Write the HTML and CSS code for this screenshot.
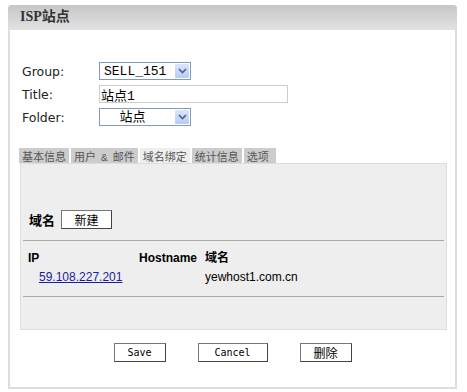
FILE: index.html
```html
<!DOCTYPE html>
<html lang="zh">
<head>
  <meta charset="UTF-8" />
  <title>ISP站点</title>
  <link rel="stylesheet" href="styles.css">
</head>
<body>
  <div class="panel">
    <div class="panel-head">ISP站点</div>
    <div class="panel-body">

      <div class="form">
        <div class="row">
          <label>Group:</label>
          <div class="selectbox sel-group">
            <select><option>SELL_151</option></select>
            <span class="arrow"><svg width="9" height="6" viewBox="0 0 9 6"><path d="M1 1 L4.5 4.5 L8 1" fill="none" stroke="#4d6185" stroke-width="1.6"/></svg></span>
          </div>
        </div>
        <div class="row">
          <label>Title:</label>
          <input type="text" class="txt" value="站点1">
        </div>
        <div class="row">
          <label>Folder:</label>
          <div class="selectbox sel-folder">
            <select><option>&nbsp;&nbsp;站点</option></select>
            <span class="arrow"><svg width="9" height="6" viewBox="0 0 9 6"><path d="M1 1 L4.5 4.5 L8 1" fill="none" stroke="#4d6185" stroke-width="1.6"/></svg></span>
          </div>
        </div>
      </div>

      <div class="tabs">
        <span class="tab">基本信息</span>
        <span class="tab">用户 &amp; 邮件</span>
        <span class="tab active">域名绑定</span>
        <span class="tab">统计信息</span>
        <span class="tab tab-last">选项</span>
      </div>

      <div class="tab-box">
        <div class="domain-bar">
          <b>域名</b>
          <button class="btn btn-new">新建</button>
        </div>
        <hr>
        <div class="grid">
          <b>IP</b><b>Hostname</b><b>域名</b>
          <a href="#" class="ip">59.108.227.201</a><span></span><span>yewhost1.com.cn</span>
        </div>
        <hr class="hr-low">
      </div>

      <div class="actions">
        <button class="btn btn-save">Save</button>
        <button class="btn btn-cancel">Cancel</button>
        <button class="btn btn-del">删除</button>
      </div>

    </div>
  </div>
</body>
</html>
```

FILE: styles.css
```css
body { margin: 0; background: #fff; font-family: "DejaVu Sans", Verdana, sans-serif; color: #222; }
.panel { margin: 5px 0 0 8px; width: 445px; border: 2px solid #ddd; border-top: none; border-radius: 4px 4px 0 0; }
.panel-head { height: 25px; margin: 0 -2px; padding-left: 12px; line-height: 25px; border-radius: 4px 4px 0 0;
  background: linear-gradient(#c6c6c6, #e2e2e2); font: bold 14px "Liberation Serif", "Noto Sans CJK SC", serif; color: #333; }
.panel-body { padding: 32px 0 25px 0; }

.form { padding-left: 12px; display: flex; flex-direction: column; gap: 5px; }
.row { display: flex; align-items: center; height: 18px; }
.row label { width: 77px; font-size: 12.5px; color: #222; }
.selectbox { display: flex; align-items: center; height: 16px; border: 1px solid #7f9db9; background: #fff; }
.selectbox select { appearance: none; -webkit-appearance: none; border: none; background: transparent; outline: none; padding: 0 0 0 4px;
  font: 13px "Liberation Mono", "Noto Sans CJK SC", monospace; color: #000; flex: 1; height: 16px; }
.sel-group { width: 90px; }
.sel-folder { width: 90px; }
.arrow { width: 14px; height: 14px; margin-right: 1px; display: flex; align-items: center; justify-content: center;
  background: linear-gradient(#dbe6fd, #b8cbf6); border-radius: 1px; }
.txt { width: 186px; height: 16px; box-sizing: content-box; padding: 0 0 0 1px; border: 1px solid #ccc;
  font: 13px "Liberation Mono", "Noto Sans CJK SC", monospace; color: #000; }

.tabs { display: flex; gap: 2px; margin: 22px 0 0 9px; }
.tab { background: #ccc; padding: 0 3px; height: 15px; line-height: 16px; white-space: pre; word-spacing: -1.5px;
  font: 11px "Liberation Mono", "Noto Sans CJK SC", monospace; color: #555; }
.tab.active { background: #eee; }
.tab-last { padding-right: 7px; }

.tab-box { margin-left: 10px; width: 427px; height: 167px; box-sizing: border-box; background: #eee; border: 1px solid #ddd;
  padding: 46px 2px 0 2px; font: 12px "Liberation Sans", Arial, "Noto Sans CJK SC", sans-serif; color: #000; }
.domain-bar { display: flex; align-items: center; gap: 6px; padding-left: 6px; }
.domain-bar b { font-size: 13px; }
hr { border: none; border-top: 1px solid #a9a9a2; margin: 11px 0 0 0; }
.hr-low { margin-top: 11px; }
.grid { display: grid; grid-template-columns: 111px 66px auto; padding: 10px 0 0 5px; row-gap: 4px; line-height: 15px; }
.grid b { font-size: 12px; }
.ip { color: #1a1aa6; padding-left: 11px; }

.btn { background: #fff; border: 1px solid #555; border-color: #777 #444 #444 #777; height: 19px; padding: 0;
  font: 10px "DejaVu Sans Mono", "Liberation Mono", "Noto Sans CJK SC", monospace; color: #000; }
.btn-new { width: 51px; height: 19px; font: 12px "Noto Sans CJK SC", sans-serif; }
.actions { display: flex; justify-content: center; gap: 32px; margin-top: 13px; }
.btn-save { width: 52px; }
.btn-cancel { width: 70px; }
.btn-del { width: 52px; font: 12px "Noto Sans CJK SC", sans-serif; }
```
